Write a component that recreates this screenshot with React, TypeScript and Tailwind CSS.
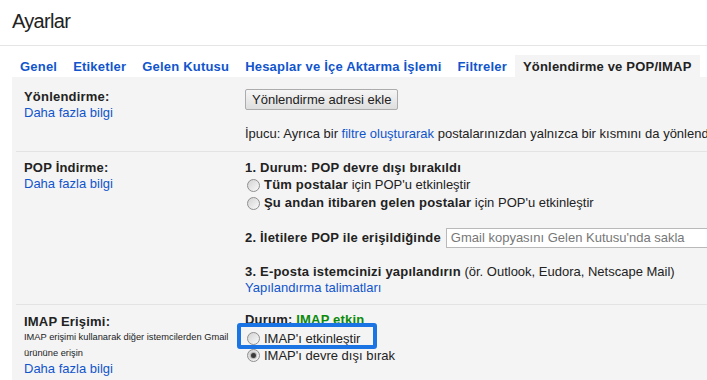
import React from "react";

const tabs = [
	{ label: "Genel" },
	{ label: "Etiketler" },
	{ label: "Gelen Kutusu" },
	{ label: "Hesaplar ve İçe Aktarma İşlemi" },
	{ label: "Filtreler" },
	{ label: "Yönlendirme ve POP/IMAP", active: true },
];

function Radio({ checked }: { checked?: boolean }) {
	return (
		<span className="ml-[2px] mr-[4px] inline-flex h-[13px] w-[13px] shrink-0 items-center justify-center rounded-full border border-[#8e8f8f] bg-linear-to-br from-[#d3d3d3] to-[#fafafa]">
			{checked && <span className="h-[5px] w-[5px] rounded-full bg-[#3a3a3a] shadow-[0_0_1px_1px_rgba(80,80,80,0.35)]" />}
		</span>
	);
}

function Label({ title, children }: { title: string; children?: React.ReactNode }) {
	return (
		<div className="w-[233px] shrink-0 pl-3">
			<div className="font-bold leading-4 tracking-[0.2px]">{title}</div>
			{children}
			<a className="block leading-4 text-[#1155cc]">Daha fazla bilgi</a>
		</div>
	);
}

function Separator() {
	return <div className="ml-1 h-px bg-[#e3e3e3]" />;
}

export default function App() {
	return (
		<div className="h-[380px] w-[707px] overflow-hidden bg-white font-['Liberation_Sans',Arial,sans-serif] text-[13px] text-[#222]">
			<div className="h-[46px] border-b border-[#e5e5e5] pl-3 pt-[11px]">
				<div className="text-[20px] leading-5 tracking-[-0.7px]">Ayarlar</div>
			</div>

			<div className="flex pl-3 pt-[9px]">
				{tabs.map((t) => (
					<div
						key={t.label}
						className={`h-[22px] whitespace-nowrap px-2 pt-1 font-bold leading-4 tracking-[0.2px] ${
							t.active ? "bg-[#f4f4f4] text-[#222]" : "text-[#1155cc]"
						}`}
					>
						{t.label}
					</div>
				))}
			</div>

			<div className="ml-3 w-[760px] bg-[#f4f4f4]">
				{/* Yönlendirme */}
				<div className="flex">
					<div className="pt-3">
						<Label title="Yönlendirme:" />
					</div>
					<div className="flex-1 pb-[9px] pt-3">
						<button className="h-[21px] rounded-[2px] border border-[#acacac] bg-linear-to-b from-[#f6f6f6] to-[#dedede] px-[6px] leading-[19px] text-[#222]">
							Yönlendirme adresi ekle
						</button>
						<div className="mt-4 whitespace-nowrap leading-4">
							İpucu: Ayrıca bir <a className="text-[#1155cc]">filtre oluşturarak</a> postalarınızdan yalnızca bir kısmını da yönlendirebilirsiniz.
						</div>
					</div>
				</div>
				<Separator />

				{/* POP */}
				<div className="flex">
					<div className="pt-2">
						<Label title="POP İndirme:" />
					</div>
					<div className="flex-1 pb-2 pt-2">
						<div className="font-bold leading-4 tracking-[0.2px]">1. Durum: POP devre dışı bırakıldı</div>
						<div className="flex h-[18px] items-center whitespace-nowrap">
							<Radio />
							<span>
								<b className="tracking-[0.2px]">Tüm postalar</b> için POP'u etkinleştir
							</span>
						</div>
						<div className="flex h-[18px] items-center whitespace-nowrap">
							<Radio />
							<span>
								<b className="tracking-[0.2px]">Şu andan itibaren gelen postalar</b> için POP'u etkinleştir
							</span>
						</div>
						<div className="mt-4 flex h-5 items-center whitespace-nowrap">
							<span className="font-bold tracking-[0.2px]">2. İletilere POP ile erişildiğinde</span>
							<div className="ml-[5px] flex h-5 w-[320px] items-center border border-[#b9b9b9] bg-white pl-1 text-[#777]">
								Gmail kopyasını Gelen Kutusu'nda sakla
							</div>
						</div>
						<div className="mt-4 whitespace-nowrap leading-4">
							<b className="tracking-[0.2px]">3. E-posta istemcinizi yapılandırın</b> (ör. Outlook, Eudora, Netscape Mail)
						</div>
						<a className="block leading-4 text-[#1155cc]">Yapılandırma talimatları</a>
					</div>
				</div>
				<Separator />

				{/* IMAP */}
				<div className="flex h-[80px]">
					<div className="w-[233px] shrink-0 pl-3 pt-[9px]">
						<div className="font-bold leading-[15px] tracking-[0.2px]">IMAP Erişimi:</div>
						<div className="text-[9.3px] leading-4">
							IMAP erişimi kullanarak diğer istemcilerden Gmail
							<br />
							ürününe erişin
						</div>
						<a className="block leading-4 text-[#1155cc]">Daha fazla bilgi</a>
					</div>
					<div className="relative flex-1 pt-[7px]">
						<div className="font-bold leading-4 tracking-[0.2px]">
							Durum: <span className="text-[#0b8a0b]">IMAP etkin</span>
						</div>
						<div className="mt-[2px] flex h-[17px] items-center">
							<Radio />
							<span>IMAP'ı etkinleştir</span>
						</div>
						<div className="flex h-[17px] items-center">
							<Radio checked />
							<span>IMAP'ı devre dışı bırak</span>
						</div>
						<div className="absolute left-[-8px] top-[18px] h-[26px] w-[140px] rounded-[3px] border-4 border-[#1b74e4]" />
					</div>
				</div>
			</div>
		</div>
	);
}
